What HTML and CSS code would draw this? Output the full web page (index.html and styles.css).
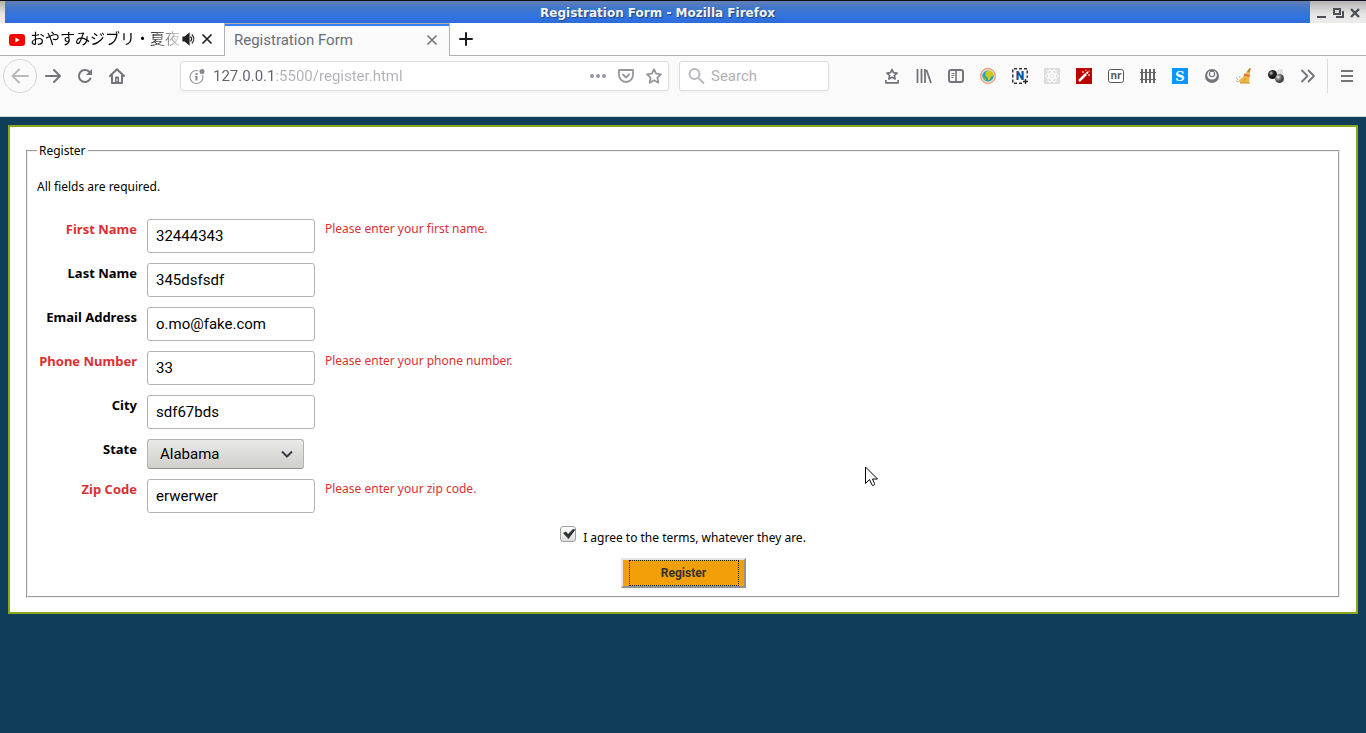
FILE: index.html
```html
<!DOCTYPE html>
<html lang="en">
<head>
<meta charset="utf-8">
<title>Registration Form</title>
<link rel="stylesheet" href="styles.css">
</head>
<body>
<header class="window-bar">
  <div class="window-title">Registration Form - Mozilla Firefox</div>
  <div class="window-controls">
    <button class="icon-btn window-btn" aria-label="Minimize"><svg width="12" height="12" viewBox="0 0 12 12"><path d="M2 9h9v2H2z" fill="#4a4f58"/></svg></button>
    <button class="icon-btn window-btn" aria-label="Restore"><svg width="12" height="12" viewBox="0 0 12 12" fill="none" stroke="#4a4f58" stroke-width="2"><path d="M2 2h6v5H2zM11 4v6H4"/></svg></button>
    <button class="icon-btn window-btn" aria-label="Close"><svg width="12" height="12" viewBox="0 0 12 12" stroke="#4a4f58" stroke-width="2.4"><path d="M2 2l8 8M10 2l-8 8"/></svg></button>
  </div>
</header>

<nav class="tabs" aria-label="Tabs">
  <div class="tab">
    <svg class="tab-logo" width="16" height="16" viewBox="0 0 16 16"><rect y="3" width="16" height="12" rx="3" fill="#f00"/><path d="M6.4 6.5v5l4.3-2.5z" fill="#fff"/></svg>
    <span class="tab-label tab-label-faded">おやすみジブリ・夏夜</span>
    <button class="icon-btn tab-btn" aria-label="Mute tab"><svg width="14" height="14" viewBox="0 0 14 14" fill="none" stroke="#222" stroke-width="1.2"><path d="M1 5h2l4-3.5v11L3 9H1z" fill="#222"/><path d="M8.8 5a3 3 0 0 1 0 4M10.2 3a6 6 0 0 1 0 8" stroke-linecap="round"/></svg></button>
    <button class="icon-btn tab-btn" aria-label="Close tab"><svg width="12" height="12" viewBox="0 0 12 12" stroke="#222" stroke-width="1.7"><path d="M1.5 1.5l9 9M10.5 1.5l-9 9"/></svg></button>
  </div>
  <div class="tab tab-active">
    <span class="tab-label">Registration Form</span>
    <button class="icon-btn tab-btn" aria-label="Close tab"><svg width="12" height="12" viewBox="0 0 12 12" stroke="#777982" stroke-width="1.7"><path d="M1.5 1.5l9 9M10.5 1.5l-9 9"/></svg></button>
  </div>
  <div class="tab-rest">
    <button class="icon-btn" aria-label="New tab"><svg width="16" height="16" viewBox="0 0 16 16" stroke="#1c1c1c" stroke-width="2" stroke-linecap="round"><path d="M8 2v12M2 8h12"/></svg></button>
  </div>
</nav>

<div class="toolbar">
  <div class="tool-group">
    <button class="icon-btn tool back" aria-label="Back"><svg width="18" height="16" viewBox="0 0 18 16" fill="none" stroke="#b9b9bd" stroke-width="2" stroke-linecap="round" stroke-linejoin="round"><path d="M8 1.5L1.5 8 8 14.5M2 8h15"/></svg></button>
    <button class="icon-btn tool" aria-label="Forward"><svg width="16" height="16" viewBox="0 0 16 16" fill="none" stroke="#73747c" stroke-width="2" stroke-linecap="round" stroke-linejoin="round"><path d="M9 2l6 6-6 6M1 8h13"/></svg></button>
    <button class="icon-btn tool" aria-label="Reload"><svg width="16" height="16" viewBox="0 0 16 16" fill="none" stroke="#73747c" stroke-width="2" stroke-linecap="round"><path d="M13.4 10.5A6 6 0 1 1 12 3.6l1.6 1.6"/><path d="M15 1v6H9z" fill="#73747c" stroke="none"/></svg></button>
    <button class="icon-btn tool" aria-label="Home"><svg width="16" height="16" viewBox="0 0 16 16" fill="none" stroke="#73747c" stroke-width="2" stroke-linejoin="round" stroke-linecap="round"><path d="M1 8l7-6.8L15 8M3 7.5V15h10V7.5"/><path d="M6.5 14.5V9h3v5.5" fill="#73747c" stroke-width="1"/><path d="M8 11v2" stroke="#fff" stroke-width="1"/></svg></button>
  </div>

  <div class="field-box url-box">
    <svg width="17" height="17" viewBox="0 0 17 17"><circle cx="7.5" cy="9" r="6.5" fill="none" stroke="#9a9aa1" stroke-width="1.2"/><path d="M6.5 5h2v2h-2zM6 8h2.5v4.5H6.5V9H6z" fill="#85868e"/><circle cx="13" cy="3.5" r="3.5" fill="#fff"/><circle cx="13" cy="3.5" r="2.5" fill="#85868e"/></svg>
    <input class="bar-input url-input" type="text" aria-label="Address" value="127.0.0.1:5500/register.html">
    <button class="icon-btn field-btn" aria-label="Page actions"><svg width="16" height="16" viewBox="0 0 16 16" fill="#96969e"><circle cx="2" cy="8" r="2"/><circle cx="8" cy="8" r="2"/><circle cx="14" cy="8" r="2"/></svg></button>
    <button class="icon-btn field-btn" aria-label="Save to Pocket"><svg width="16" height="16" viewBox="0 0 16 16" fill="none" stroke="#96969e" stroke-width="1.8" stroke-linecap="round" stroke-linejoin="round"><path d="M1 2h14v5a7 7 0 0 1-14 0zM5 6.5l3 3 3-3"/></svg></button>
    <button class="icon-btn field-btn" aria-label="Bookmark"><svg width="16" height="16" viewBox="0 0 16 16" fill="none" stroke="#96969e" stroke-width="1.8" stroke-linejoin="round"><path d="M8 1.2l2.1 4.5 4.9.6-3.6 3.4.9 5L8 12.3l-4.3 2.4.9-5L1 6.300l4.900-.6z"/></svg></button>
  </div>

  <div class="field-box search-box">
    <svg width="17" height="16" viewBox="0 0 17 16" fill="none" stroke="#b9b9bd" stroke-width="2"><circle cx="6.5" cy="6" r="5"/><path d="M10 9.5l6 6"/></svg>
    <input class="bar-input" type="search" aria-label="Search" placeholder="Search">
  </div>

  <div class="tool-group">
    <button class="icon-btn tool" aria-label="Bookmarks menu"><svg width="16" height="16" viewBox="0 0 16 16" fill="none" stroke="#73747c" stroke-width="1.7" stroke-linejoin="round"><path d="M8 1.5l1.5 3.2 3.500.4-2.600 2.400.7 3.5L8 9.300 4.900 11l.7-3.500L3 5.100l3.500-.4z"/><path d="M1.9 12v2.900h12.200V12"/></svg></button>
    <button class="icon-btn tool" aria-label="Library"><svg width="16" height="16" viewBox="0 0 16 16" stroke="#73747c" stroke-width="1.8"><path d="M1.5 1v14M5.500 1v14M9 1v14M10.500 2L15 15"/></svg></button>
    <button class="icon-btn tool" aria-label="Sidebars"><svg width="16" height="16" viewBox="0 0 16 16" fill="none" stroke="#73747c"><rect x="1" y="2" width="14" height="12" rx="2" stroke-width="2"/><path d="M8 2v12" stroke-width="1.6"/><path d="M3.500 5.500h3M3.500 7.500h3M3.500 9.500h2"/></svg></button>
    <button class="icon-btn tool" aria-label="Globe extension"><svg width="16" height="16" viewBox="0 0 16 16"><circle cx="8" cy="8" r="7.300" fill="#fff" stroke="#f58a6d" stroke-width="1.3"/><circle cx="8" cy="8" r="5.800" fill="#28a5b5"/><path d="M5.500 4.500L8 2.500l3.500.5 2 3-.500 2-2 .5-1.500 4-1.500-.5-.5-3-2-1z" fill="#d3c91a"/><path d="M2.300 8l3 1.500 1.500 3.500a5.800 5.800 0 0 1-4.500-5z" fill="#8fb02c"/></svg></button>
    <button class="icon-btn tool" aria-label="Nimbus extension"><svg width="16" height="16" viewBox="0 0 16 16"><path d="M10 15.250H.75V.75h14.500v9" fill="none" stroke="#333" stroke-width="1.5" stroke-dasharray="3 2"/><path d="M13.500 11v5M11 13.500h5" stroke="#222" stroke-width="1.3"/><text x="8" y="12" class="nimbus-letter">N</text></svg></button>
    <button class="icon-btn tool" aria-label="React tools"><svg width="16" height="16" viewBox="0 0 16 16" fill="none" stroke="#fff"><path d="M0 0h16v16H0z" fill="#dedede" stroke="none"/><ellipse cx="8" cy="8" rx="6.500" ry="2.600"/><ellipse cx="8" cy="8" rx="6.500" ry="2.600" transform="rotate(60 8 8)"/><ellipse cx="8" cy="8" rx="6.500" ry="2.600" transform="rotate(120 8 8)"/><circle cx="8" cy="8" r="1" fill="#fff"/></svg></button>
    <button class="icon-btn tool" aria-label="Color wand"><svg width="16" height="16" viewBox="0 0 16 16"><path d="M0 0h16v16H0z" fill="#bd0000"/><path d="M3 13l7-7" stroke="#fff" stroke-width="2.5"/><path d="M10.500 5.500l1.500-1.500" stroke="#fff" stroke-width="2"/><path d="M7 3v2M6 4h2M10 1.500v1.500M13 2.500v1.500M13 6v2M12 7h2" stroke="#f5b5b5"/></svg></button>
    <button class="icon-btn tool" aria-label="nr extension"><svg width="16" height="16" viewBox="0 0 16 16"><rect x=".5" y="1.5" width="15" height="13" rx="2" fill="#fff" stroke="#555"/><text x="8" y="11" class="nr-letters">nr</text></svg></button>
    <button class="icon-btn tool" aria-label="Fence extension"><svg width="16" height="16" viewBox="0 0 16 16" stroke="#666"><path d="M2 1v14M6 1v14M10 1v14M14 1v14" stroke-width="2"/><path d="M0 4.500h16M0 11.500h16" stroke-width="1.2"/></svg></button>
    <button class="icon-btn tool" aria-label="Stylus extension"><svg width="16" height="16" viewBox="0 0 16 16"><path d="M0 0h16v16H0z" fill="#0a96ff"/><text x="8" y="13" class="stylus-letter">S</text></svg></button>
    <button class="icon-btn tool" aria-label="Account"><svg width="16" height="16" viewBox="0 0 16 16"><circle cx="8" cy="8" r="7" fill="#73747c"/><path d="M3.200 7.500C3.200 4.800 4.500 3 6 3h4c1.500 0 2.800 1.800 2.800 4.500C12.500 10 10.500 11.500 8 11.500S3.500 10 3.200 7.500z" fill="#fafafa"/><circle cx="8" cy="6" r="3.200" fill="#73747c"/><path d="M6.200 4h3.600v2.200a1.800 2 0 0 1-3.600 0z" fill="#fafafa"/></svg></button>
    <button class="icon-btn tool" aria-label="Clear cache"><svg width="16" height="16" viewBox="0 0 16 16"><path d="M13.500 0l1.500.700L13.500 5l-3-1z" fill="#b5883b"/><path d="M11 3.500l3 2-1 9.500H4L3 12l4-3z" fill="#edb845"/><path d="M8 6.500l5.500 1.500" stroke="#e56d37" stroke-width="2"/><path d="M8 13l1.500-3M4 15h10" stroke="#c98f2b"/><path d="M0 9l2 3M0 13l3 1M3 8l1 2" stroke="#b8bdb8"/></svg></button>
    <button class="icon-btn tool" aria-label="Spheres extension"><svg width="16" height="16" viewBox="0 0 16 16"><defs><radialGradient id="dark-ball" cx=".35" cy=".35"><stop stop-color="#ccc"/><stop offset=".5" stop-color="#333"/><stop offset="1" stop-color="#111"/></radialGradient><radialGradient id="gray-ball" cx=".35" cy=".35"><stop stop-color="#eee"/><stop offset=".6" stop-color="#777"/><stop offset="1" stop-color="#444"/></radialGradient></defs><circle cx="12" cy="4" r="3" fill="#ddd"/><circle cx="4.500" cy="6.500" r="4.500" fill="url(#dark-ball)"/><circle cx="11.500" cy="10.500" r="4.500" fill="url(#gray-ball)"/></svg></button>
    <button class="icon-btn tool" aria-label="More tools"><svg width="16" height="16" viewBox="0 0 16 16" fill="none" stroke="#73747c" stroke-width="1.8" stroke-linecap="round" stroke-linejoin="round"><path d="M2 2.500L7.500 8 2 13.500M8.500 2.500L14 8l-5.500 5.500"/></svg></button>
  </div>
  <div class="menu-area">
    <button class="icon-btn" aria-label="Open menu"><svg width="12" height="16" viewBox="0 0 12 16" stroke="#73747c" stroke-width="2"><path d="M0 3h12M0 8h12M0 13h12"/></svg></button>
  </div>
</div>

<main class="page">
  <form class="card">
    <fieldset class="register">
      <legend>Register</legend>
      <p class="intro">All fields are required.</p>
      <div class="rows">
        <div class="row invalid"><label for="first">First Name</label><input class="text-input" id="first" type="text" value="32444343"><span class="message">Please enter your first name.</span></div>
        <div class="row"><label for="last">Last Name</label><input class="text-input" id="last" type="text" value="345dsfsdf"></div>
        <div class="row"><label for="email">Email Address</label><input class="text-input" id="email" type="text" value="o.mo@fake.com"></div>
        <div class="row invalid"><label for="phone">Phone Number</label><input class="text-input" id="phone" type="text" value="33"><span class="message">Please enter your phone number.</span></div>
        <div class="row"><label for="city">City</label><input class="text-input" id="city" type="text" value="sdf67bds"></div>
        <div class="row"><label for="state">State</label>
          <div class="select-wrap"><select class="state-select" id="state"><option>Alabama</option></select><svg class="chevron" width="12" height="8" viewBox="0 0 12 8" fill="none" stroke="#3b3f45" stroke-width="2"><path d="M1 1.500l5 5 5-5"/></svg></div>
        </div>
        <div class="row invalid"><label for="zip">Zip Code</label><input class="text-input" id="zip" type="text" value="erwerwer"><span class="message">Please enter your zip code.</span></div>
      </div>
      <div class="terms">
        <span class="check-wrap"><input class="check" id="terms" type="checkbox" checked><svg class="tick" width="14" height="12" viewBox="0 0 14 12"><path d="M1 5l3-1.500L6 6l5-5 2.500.5L6.500 11z" fill="#2f3439"/></svg></span>
        <label for="terms">I agree to the terms, whatever they are.</label>
      </div>
      <div class="actions"><button class="submit" type="button"><span class="submit-focus">Register</span></button></div>
    </fieldset>
  </form>
</main>
<svg class="pointer" width="14" height="21" viewBox="0 0 14 21"><path d="M.5 1v16.500l4-4 2.500 5.500c1 1 3 0 2.500-1.500L7.500 13h5z" fill="#fff" stroke="#000"/></svg>
</body>
</html>
```

FILE: styles.css
```css
* { box-sizing: border-box; }

body {
  margin: 0;
  min-height: 100vh;
  display: flex;
  flex-direction: column;
  background: #0f3d5a;
  color: #000;
  font-family: "Noto Sans", sans-serif;
  font-size: 12px;
}

button, input, select { font-family: Roboto, sans-serif; }

svg { display: block; flex: none; }

.icon-btn {
  display: flex;
  align-items: center;
  justify-content: center;
  padding: 0;
  border: 0;
  background: none;
}

/* Window frame */
.window-bar {
  display: flex;
  height: 23px;
  padding-left: 5px;
  border-top: 1px solid #10101c;
  background: linear-gradient(#b5b0b3, #e6e6e6 60%, #ececec);
}

.window-title {
  flex: 1;
  background: linear-gradient(#627fb4, #3f75cb 35%, #3174e2 70%, #2e6bd9);
  color: #f2f2f2;
  font: bold 12px/24px "DejaVu Sans", sans-serif;
  text-align: center;
  text-shadow: 1px 1px 1px #24427c;
}

.window-controls {
  display: flex;
  align-items: center;
  gap: 5px;
  padding: 2px 5px 0 5px;
}

/* Tabs */
.tabs {
  display: flex;
  height: 33px;
  background: #fff;
  font: 15px/20px Roboto, "Noto Sans CJK JP", sans-serif;
}

.tab {
  display: flex;
  align-items: center;
  gap: 5px;
  width: 224px;
  padding: 0 11px 0 9px;
  border-bottom: 1px solid #b1b1b3;
}

.tab-active {
  width: 226px;
  border: solid #b1b1b3;
  border-width: 1px 1px 0;
  background: #fafafa;
  box-shadow: inset 0 2px #3080f8;
  color: #6c6d77;
}

.tab-label {
  flex: 1;
  white-space: nowrap;
}

.tab-label-faded {
  margin-right: -4px;
  -webkit-mask-image: linear-gradient(90deg, #000 75%, #0002);
  mask-image: linear-gradient(90deg, #000 75%, #0002);
}

.tab-rest {
  flex: 1;
  display: flex;
  padding-left: 8px;
  border-bottom: 1px solid #b1b1b3;
}

/* Navigation toolbar */
.toolbar {
  display: flex;
  align-items: flex-start;
  height: 61px;
  padding: 3px 0 0 3px;
  border-bottom: 1px solid #d8d8da;
  background: #fafafa;
}

.tool-group { display: flex; align-items: center; }

.tool { width: 32px; height: 34px; }

.back {
  width: 34px;
  border: 1px solid #d4d4d6;
  border-radius: 50%;
}

.field-box {
  display: flex;
  align-items: center;
  height: 30px;
  margin-top: 2px;
  padding: 0 4px 0 8px;
  border: 1px solid #dededf;
  border-radius: 3px;
  background: #fff;
  box-shadow: 0 1px 3px #0000000c;
}

.url-box { flex: 1; margin-left: 47px; gap: 7px; }

.search-box { width: 150px; margin: 2px 47px 0 10px; gap: 6px; }

.bar-input {
  flex: 1;
  min-width: 0;
  padding: 0;
  border: 0;
  outline: 0;
  background: transparent;
  font-size: 15px;
  line-height: 20px;
}

.bar-input::placeholder { color: #b1b1b5; }

.url-input {
  background: linear-gradient(90deg, #5f606a 61px, #b0b0b6 61px);
  -webkit-background-clip: text;
  background-clip: text;
  color: transparent;
}

.field-btn { width: 21px; }

.menu-area {
  display: flex;
  justify-content: center;
  width: 39px;
  height: 34px;
  margin-left: 3px;
  border-left: 1px solid #dcdcde;
}

.nimbus-letter { font: 900 12px Roboto, sans-serif; fill: #0b51a0; text-anchor: middle; }
.nr-letters { font: bold 10px "Open Sans", sans-serif; fill: #555; text-anchor: middle; }
.stylus-letter { font: bold 13px "DejaVu Serif", serif; fill: #fff; text-anchor: middle; }

/* Form */
.page { padding: 8px; }

.card {
  padding: 14px;
  border: 2px solid #88a71d;
  background: #fff;
}

.register {
  margin: 0 2px;
  padding: 0 9px 8px;
  border: 2px groove #f0f0f0;
}

legend { padding: 0 2px; line-height: 20px; }

.intro { margin: 16px 0 22px; line-height: 20px; }

.rows { display: grid; gap: 10px; }

.row {
  display: grid;
  grid-template-columns: 100px 168px 1fr;
  column-gap: 10px;
  line-height: 20px;
}

.row label { font-size: 13px; font-weight: bold; text-align: right; }

.invalid label, .message { color: #db2f34; }

.text-input {
  height: 34px;
  padding: 0 8px;
  border: 1px solid #b2b2b0;
  border-radius: 3px;
  background: #fff;
  font-size: 15px;
}

.select-wrap { position: relative; width: 157px; }

.state-select {
  display: block;
  width: 100%;
  height: 30px;
  padding: 0 12px;
  border: 1px solid #b2b2b0;
  border-bottom-color: #91918d;
  border-radius: 3px;
  background: linear-gradient(#e9e9e7, #cfcfcc);
  color: #000;
  font-size: 15px;
  appearance: none;
}

.chevron { position: absolute; right: 11px; top: 11px; pointer-events: none; }

.terms {
  display: flex;
  justify-content: center;
  gap: 7px;
  margin-top: 13px;
}

.terms label { padding-top: 2px; line-height: 20px; }

.check-wrap { position: relative; height: 16px; }

.check {
  display: block;
  width: 16px;
  height: 16px;
  margin: 0;
  border: 1px solid #a1a19f;
  border-radius: 3px;
  background: linear-gradient(#fff, #dededc);
  appearance: none;
}

.tick { position: absolute; left: 2px; top: 2px; pointer-events: none; }

.actions { display: flex; justify-content: center; margin-top: 10px; }

.submit {
  width: 125px;
  height: 30px;
  padding: 0 5px 0 6px;
  border: 2px outset #e5e5e5;
  background: #f39f08;
  color: #333;
  font-size: 12px;
  font-weight: bold;
}

.submit-focus {
  display: block;
  border: 1px dotted #222;
  line-height: 24px;
}

.pointer { position: absolute; left: 865px; top: 466px; }
```
